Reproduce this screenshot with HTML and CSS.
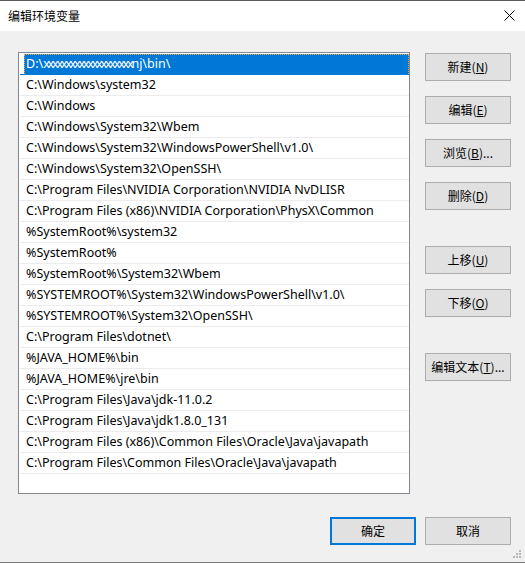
FILE: index.html
```html
<!DOCTYPE html>
<html lang="zh-CN">
<head>
<meta charset="utf-8">
<title>编辑环境变量</title>
<link rel="stylesheet" href="styles.css">
</head>
<body>
<div class="window">
  <div class="titlebar">
    <span class="title">编辑环境变量</span>
    <span class="close">
      <svg width="11" height="11" viewBox="0 0 11 11"><path d="M0.5 0.5 L10.5 10.5 M10.5 0.5 L0.5 10.5" stroke="#000" stroke-width="1" fill="none"/></svg>
    </span>
  </div>
  <div class="content">
    <div class="main">
      <div class="list">
        <div class="row selected"><span class="cell">D:\<span class="mask">xxxxxxxxxxxxxxxxxxxx</span>nj\bin\</span></div>
        <div class="row"><span class="cell">C:\Windows\system32</span></div>
        <div class="row"><span class="cell">C:\Windows</span></div>
        <div class="row"><span class="cell">C:\Windows\System32\Wbem</span></div>
        <div class="row"><span class="cell">C:\Windows\System32\WindowsPowerShell\v1.0\</span></div>
        <div class="row"><span class="cell">C:\Windows\System32\OpenSSH\</span></div>
        <div class="row"><span class="cell">C:\Program Files\NVIDIA Corporation\NVIDIA NvDLISR</span></div>
        <div class="row"><span class="cell">C:\Program Files (x86)\NVIDIA Corporation\PhysX\Common</span></div>
        <div class="row"><span class="cell">%SystemRoot%\system32</span></div>
        <div class="row"><span class="cell">%SystemRoot%</span></div>
        <div class="row"><span class="cell">%SystemRoot%\System32\Wbem</span></div>
        <div class="row"><span class="cell">%SYSTEMROOT%\System32\WindowsPowerShell\v1.0\</span></div>
        <div class="row"><span class="cell">%SYSTEMROOT%\System32\OpenSSH\</span></div>
        <div class="row"><span class="cell">C:\Program Files\dotnet\</span></div>
        <div class="row"><span class="cell">%JAVA_HOME%\bin</span></div>
        <div class="row"><span class="cell">%JAVA_HOME%\jre\bin</span></div>
        <div class="row"><span class="cell">C:\Program Files\Java\jdk-11.0.2</span></div>
        <div class="row"><span class="cell">C:\Program Files\Java\jdk1.8.0_131</span></div>
        <div class="row"><span class="cell">C:\Program Files (x86)\Common Files\Oracle\Java\javapath</span></div>
        <div class="row"><span class="cell">C:\Program Files\Common Files\Oracle\Java\javapath</span></div>
      </div>
      <div class="side">
        <div class="group">
          <button class="btn">新建(<u>N</u>)</button>
          <button class="btn">编辑(<u>E</u>)</button>
          <button class="btn">浏览(<u>B</u>)...</button>
          <button class="btn">删除(<u>D</u>)</button>
        </div>
        <div class="group">
          <button class="btn">上移(<u>U</u>)</button>
          <button class="btn">下移(<u>O</u>)</button>
        </div>
        <div class="group">
          <button class="btn">编辑文本(<u>T</u>)...</button>
        </div>
      </div>
    </div>
    <div class="footer">
      <button class="btn default">确定</button>
      <button class="btn">取消</button>
    </div>
  </div>
  <svg class="grip" width="9" height="9" viewBox="0 0 9 9">
    <rect x="6" y="0" width="2" height="2" fill="#b8b8b8"/>
    <rect x="3" y="3" width="2" height="2" fill="#b8b8b8"/>
    <rect x="6" y="3" width="2" height="2" fill="#b8b8b8"/>
    <rect x="0" y="6" width="2" height="2" fill="#b8b8b8"/>
    <rect x="3" y="6" width="2" height="2" fill="#b8b8b8"/>
    <rect x="6" y="6" width="2" height="2" fill="#b8b8b8"/>
  </svg>
</div>
</body>
</html>
```

FILE: styles.css
```css
html, body {
  margin: 0;
  padding: 0;
  background: #f0f0f0;
}

body {
  font-family: "Noto Sans", "Noto Sans CJK SC", sans-serif;
  font-size: 12px;
  color: #000;
}

.window {
  position: relative;
  width: 525px;
  height: 563px;
  box-sizing: border-box;
  border-top: 1px solid #5c5c5c;
  border-bottom: 1px solid #7a7a7a;
  display: flex;
  flex-direction: column;
}

.titlebar {
  height: 30px;
  background: #fff;
  display: flex;
  align-items: center;
  justify-content: space-between;
  padding: 0 10px 0 8px;
}

.title {
  font-family: "Noto Sans CJK SC", sans-serif;
  font-size: 12px;
  line-height: 14px;
  margin-top: -1px;
}

.close {
  display: flex;
  width: 11px;
  height: 11px;
  margin-top: -1px;
}

.content {
  flex: 1;
  background: #f0f0f0;
  padding: 21px 14px 0 18px;
  display: flex;
  flex-direction: column;
}

.main {
  display: flex;
  gap: 15px;
}

.list {
  width: 392px;
  height: 442px;
  box-sizing: border-box;
  border: 1px solid #828790;
  background: #fff;
  padding: 1px 0 0 1px;
  overflow: hidden;
  font-size: 12.5px;
}

.row {
  height: 20px;
  border-bottom: 1px solid #ececec;
  display: flex;
}

.cell {
  flex: 1;
  padding-left: 6px;
  line-height: 20px;
  white-space: nowrap;
}

.mask {
  letter-spacing: -2.2px;
}

.row.selected {
  border-bottom-color: #0078d7;
}

.row.selected .cell {
  margin-left: 4px;
  padding-left: 1px;
  background: #0078d7;
  color: #fff;
  border: 1px dotted #f2a33a;
  line-height: 18px;
  height: 19px;
  border-bottom: none;
}

.side {
  padding-top: 1px;
  display: flex;
  flex-direction: column;
  gap: 36px;
}

.group {
  display: flex;
  flex-direction: column;
  gap: 15px;
}

.btn {
  width: 86px;
  height: 28px;
  box-sizing: border-box;
  background: #e1e1e1;
  border: 1px solid #adadad;
  font-family: "Noto Sans CJK SC", sans-serif;
  font-size: 12px;
  color: #000;
  padding: 0;
  margin: 0;
  line-height: 14px;
}

.btn u {
  text-underline-offset: 1px;
}

.btn.default {
  border: 2px solid #0078d7;
}

.footer {
  margin-top: 23px;
  display: flex;
  justify-content: flex-end;
  gap: 9px;
}

.grip {
  position: absolute;
  right: 3px;
  bottom: 3px;
}
```
